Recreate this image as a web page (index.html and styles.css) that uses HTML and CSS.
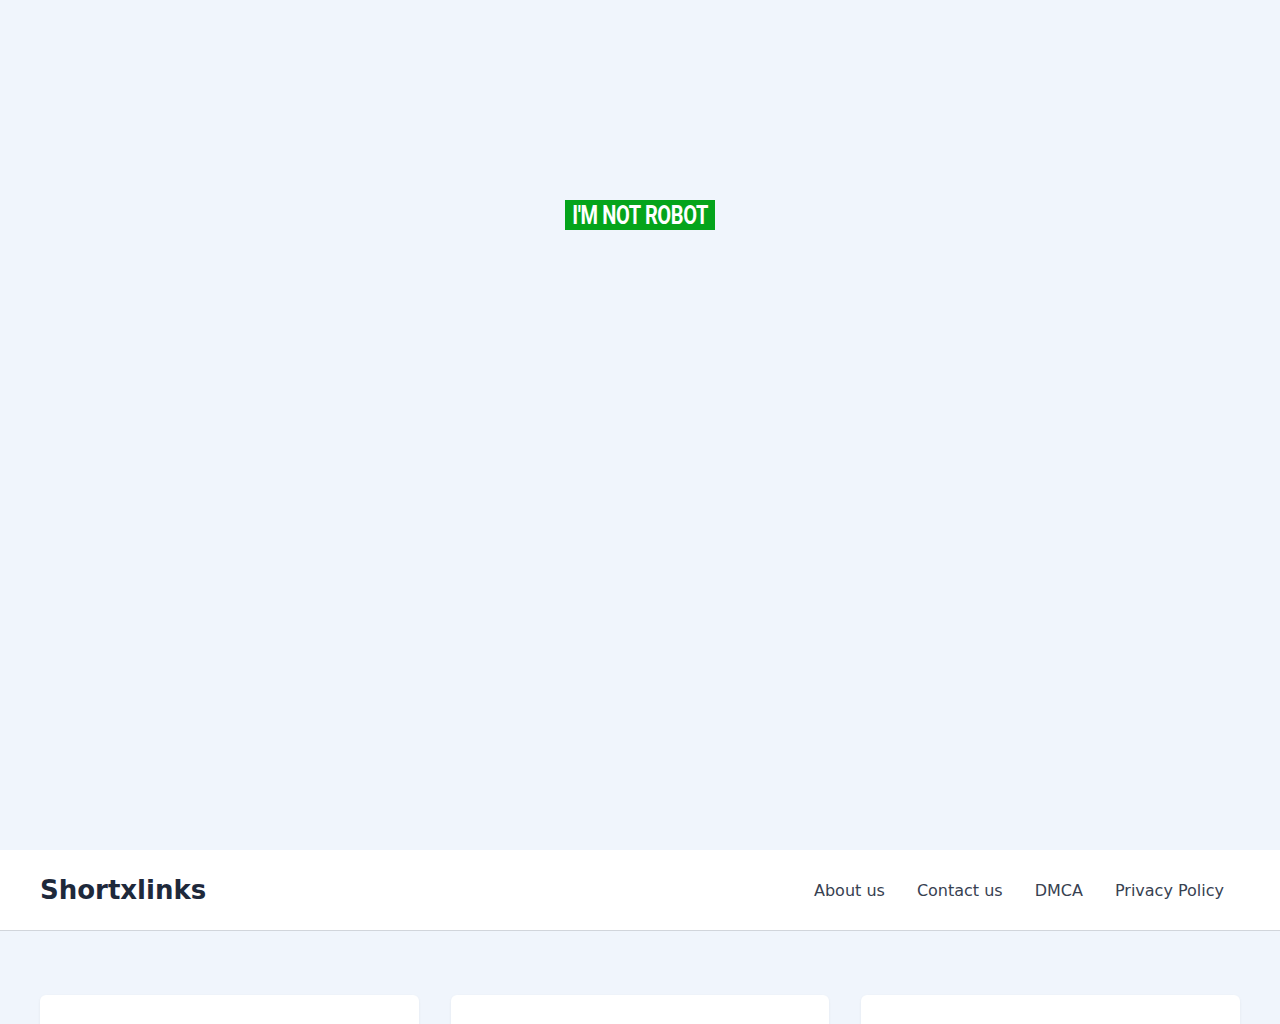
FILE: index.html
```html
<!DOCTYPE html>
<html lang="en">
<head>
    <meta charset="UTF-8">
    <title>Shortxlinks</title>
    <link rel="stylesheet" href="styles.css">
</head>
<body>
<main class="verify">
    <a class="robot" href="#"><span>I'M NOT ROBOT</span></a>
</main>
<header class="site-header">
    <div class="container bar">
        <a class="brand" href="#">Shortxlinks</a>
        <nav class="links">
            <a href="#">About us</a>
            <a href="#">Contact us</a>
            <a href="#">DMCA</a>
            <a href="#">Privacy Policy</a>
        </nav>
    </div>
</header>
<section class="container cards">
    <div class="card"></div>
    <div class="card"></div>
    <div class="card"></div>
</section>
</body>
</html>
```

FILE: styles.css
```css
* {
    padding: 0;
    margin: 0;
    box-sizing: border-box;
}

body {
    background: #f0f5fc;
    font-family: "DejaVu Sans", sans-serif;
    color: #1e293b;
}

a {
    text-decoration: none;
}

.verify {
    height: 850px;
    padding-top: 200px;
    display: flex;
    justify-content: center;
    align-items: flex-start;
}

.robot {
    display: flex;
    justify-content: center;
    width: 150px;
    height: 30px;
    background: #05a41b;
    color: #ffffff;
    font-family: Roboto, "Liberation Sans", sans-serif;
    font-weight: 700;
    font-size: 26px;
    line-height: 30px;
    white-space: nowrap;
}

.robot span {
    display: inline-block;
    letter-spacing: -0.5px;
    transform: scaleX(0.77);
}

.container {
    width: 1200px;
    margin: 0 auto;
}

.site-header {
    background: #ffffff;
    border-bottom: 1px solid #d1d5db;
}

.bar {
    height: 80px;
    display: flex;
    align-items: center;
    justify-content: space-between;
}

.brand {
    font-size: 26px;
    font-weight: 700;
    color: #1e293b;
}

.links {
    display: flex;
}

.links a {
    padding: 0 16px;
    font-size: 16px;
    color: #374151;
}

.cards {
    margin-top: 64px;
    display: grid;
    grid-template-columns: repeat(3, 1fr);
    gap: 32px;
}

.card {
    height: 300px;
    background: #ffffff;
    border-radius: 6px;
    box-shadow: 0 1px 3px rgba(0, 0, 0, 0.06);
}
```
